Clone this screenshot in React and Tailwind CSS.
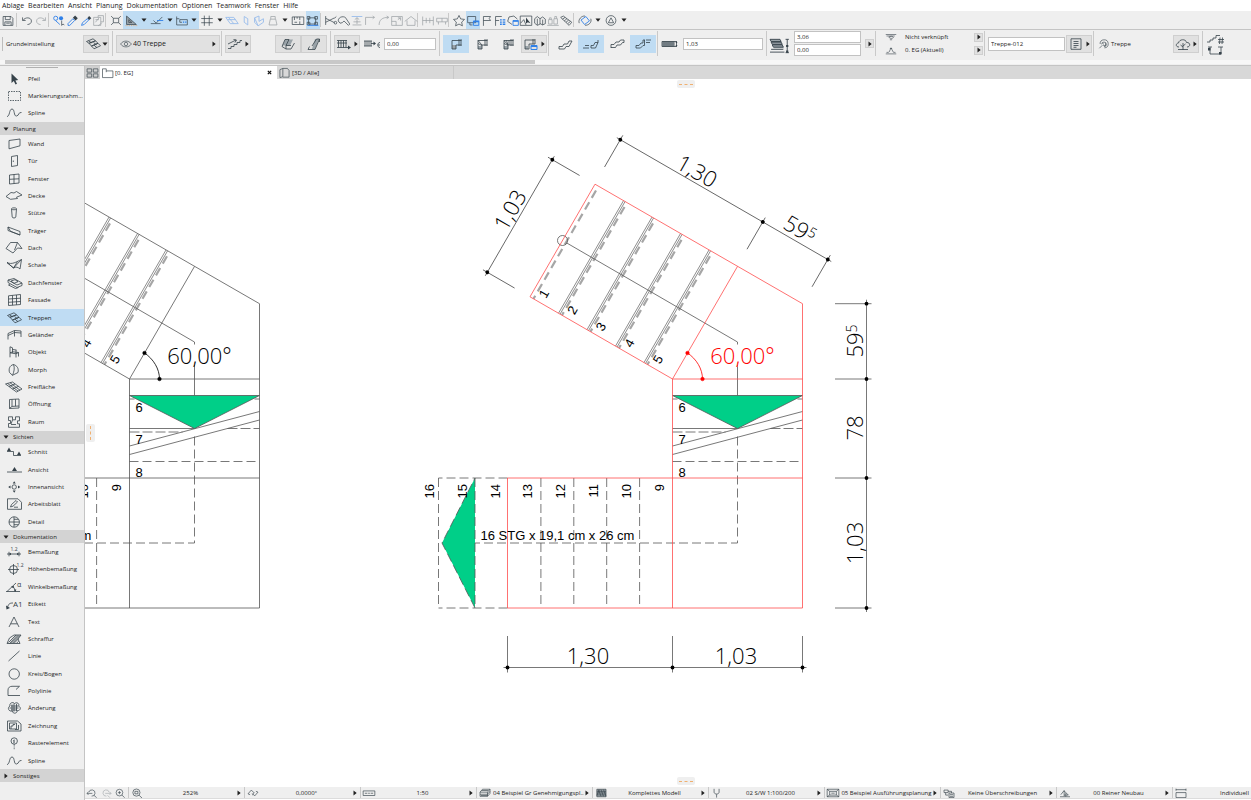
import { useState } from 'react';
import clsx from 'clsx';

const INK = '#36424a';
const BLUE = '#2f80e8';

// d: outline, f: filled shape, b: blue outline, bf: blue filled shape, s: shaded face, t: small lettering [x, y, size, text]
const icons = {
  // palette
  arrow: { f: 'M6.500 .5v9.500l2.300-2 1.700 3.500 1.500-.8-1.600-3.200 2.800-.4z' },
  marquee: { d: 'M3.500 1.500h12v9h-12z', dash: '1.500 1' },
  spline: { d: 'M2 9.500C5 9.500 4 2 7 2s1.500 7.500 4.500 7 1.500-4 5-3.500' },
  wall: { d: 'M4 2.500L15 1v6.800L4 10.800z' },
  door: { d: 'M6.500 1.500L12.500.5v10l-6 1zM8.300 5.500v1.500' },
  window: { d: 'M4.500 2l9.500-1v9l-9.500 1zM9 1.500v9M4.500 6.300L14 5.800' },
  slab: { d: 'M1 6.500l5-4L9 3l2.500-1.500L17 5l-5.500 2.200 1 1.300L5.500 9.300z' },
  column: { d: 'M6.500 1.800c0-1.300 5-1.300 5 0s-5 1.300-5 0l.7 8.200c0 1.300 3.600 1.300 3.600 0l.7-8.200' },
  beam: { d: 'M3 2l12 4.500v3.500L3 5.500zM3 2l2.500 4.300 9.500 3.700' },
  roof: { d: 'M1 6.500l4.500-6h7l4.500 6-4.500-.5L8 11zM12.500.5L9.500 8' },
  shell: { d: 'M2 3.500c5 2.500 9-.5 14.500-3L15 10c-2-2-4-2.500-6.500-1zM2 3.500L8.500 9l4-6.500M8.500 9l8-8.500' },
  skylight: { d: 'M3 3l6-1.500L17 6l-5 2zM3 3v2.500l9 5 5-2V6M6 4l4-1.300 3 2L9 6.300zM5 7.500L3.500 8l7 3.500 3-1' },
  facade: { d: 'M3.500 1.800L15.500.5v10L3.500 11.500zM7.500 1.400v9.800M11.500 1v9.800M3.500 5l12-.8M3.500 8.300l12-.8' },
  stair: { d: 'M2.500 3.500L9 .8l2.500 2-6.500 2.500zM5 5.300l6.500-2.500L14 5.300 7.500 8zM7.500 8L14 5.300l2.500 2.500L10 10.800zM4.500 2.800l3 2M9.500 4.500l3 2.300M10 7.200l3 2.500' },
  railing: { d: 'M3 4.500L9.500 1.500 16 2M3 4.500v6M9.500 1.500v6M16 2v6M3 6.500L9.500 3.500 16 4' },
  chair: { d: 'M5 .8v6l6 1V4M5 .8l2.500 1v5M5 6.800v4.500M11 7.800v3.700M13.500 6.500v4M5 6.800l3-1 5.500.7-2.500 1.300M7.500 3.500l4 .5' },
  morph: { d: 'M8.500.5C4.500 1.500 3.500 5 4.500 8.500l3 2.800L13 8.500c1-4-1-7-4.500-8zM8.500.5C10 4 9 8 7.500 11.300' },
  mesh: { d: 'M.5 3l7-2 9.500 7-5.500 3zM2.500 2.400L13 10M5 1.700L15 9.200M4 5.500l6-2.500M7.500 8l6-2.700' },
  opening: { d: 'M4.500 1.500L14 1v9l-9.500.5zM7 1.400v7L14 8M7 8.400l-2.500 2M10.500 1.200v7' },
  zone: { d: 'M3.500.8h4v3h3v-3h4v4h-2v3h2v3.500h-11V7.500h2v-3h-2zM6 8.500l5 0M6 8l1.500-4' },
  section: { d: 'M2 5.500h6.500v4H16', f: 'M2 5L4 1.500 6 5zM12 9l2-3.500L16 9z' },
  elevation: { d: 'M2 8h15', f: 'M7 7l2.500-4L12 7z' },
  interior: { d: 'M7 6a2.200 2.200 0 1 0 4.400 0a2.200 2.200 0 1 0-4.400 0', f: 'M7.700 2.500L9.200.2l1.500 2.300zM7.700 9.500l1.500 2.300 1.500-2.300zM5.500 4.500L3.200 6l2.300 1.500zM13 4.500L15.300 6 13 7.500z' },
  worksheet: { d: 'M2.500.8h10.500l3.500 3.500v7h-14zM5.500 9l1-2.500L11 2.500l1.500 1.500L8 8.200zM9 9.200h4' },
  detail: { d: 'M4 6a5.200 5.200 0 1 0 10.400 0a5.200 5.200 0 1 0-10.400 0M9 .8v10.400M4 6h10.400M9 3.300h4.300M9 8.700h4.300' },
  dim: { d: 'M2 8h14M4 5.800v4.500M14 5.800v4.500', f: 'M4 8l2-1.200v2.400zM14 8l-2-1.200v2.400z', t: [5.5, 4.5, 5, '1.2'] },
  level: { d: 'M4.500 6.500a4 4 0 1 0 8 0a4 4 0 1 0-8 0M8.500 1v11M3 6.500h11', t: [11.5, 3.8, 5, '1.2'] },
  angle: { d: 'M1 10.500h14M2 10.500L11 2M7.500 5.500c2 1 2.500 3 2.500 5', f: 'M6 5.500l3-.5-.5 2.500zM9 8.500h2.400L10.200 11z', t: [12, 5.5, 7, 'α'] },
  label: { d: 'M2.500 9.500c1-4 2.500-4.500 5.500-4.500', f: 'M1 7.500l4 2.500-3.500 1.500z', t: [8, 9, 8, 'A1'] },
  text: { d: 'M4 11L9 1l5 10M5.700 7.800h6.600' },
  hatch: { d: 'M2 10.500L4.500 5 9 2h7L13 6l2 4.500zM3.500 9.500L11 2M6 10.300L14 2.300M9 10.300l4.500-4.500M11.500 10.300l2-2M4.500 10.500L12.500 2M7.500 10.300L15 2.500' },
  line: { d: 'M3.500 11L14.500 1' },
  circle: { d: 'M4 6a5.200 5.200 0 1 0 10.400 0a5.200 5.200 0 1 0-10.400 0' },
  polyline: { d: 'M15 10.500H3V5c0-2.500 2-3.700 4-3.700h7.500L11 4.500' },
  change: { d: 'M5 4C4 1 8-.5 9.500 1.500 12-.5 15 2 13.500 4.200 16.500 5 15.500 9 12.500 8.500 12 12 7.500 12 7.500 9 3.500 10 2 5.500 5 4zM4.500 6h9M6 4h7M6 8h6M9 1.500v8M7 2.500v6M11.500 2v7' },
  drawing: { d: 'M2.500 1h10l3.500 3v7H2.500zM4.500 3h7v6h-7zM6 9V6h2V4.500h2M13.500 5v4.500H10' },
  grid: { d: 'M6 4a3.200 3.200 0 1 0 6.400 0a3.200 3.200 0 1 0-6.400 0M9.200 7.200v1.500M9.200 9.500v1M9.200 11.200v1', f: 'M8.500 3.200l1-1v4h-1z' },
  // tool bar
  save: { d: 'M3.500 1.500h9l2 2v8h-11zM6 1.500v3.500h5.500V1.500M5.500 11.500V7.500h7v4M7 9h4' },
  undo: { d: 'M4 2.500v3.500h3.500M4.500 5.800C7 2 13.500 2 14 6.500c0 2.500-2 4-4.500 4' },
  redo: { d: 'M14 2.500v3.500h-3.500M13.500 5.800C11 2 4.500 2 4 6.500c0 2.500 2 4 4.500 4' },
  find: { b: 'M3 3.500a2.300 2.300 0 1 0 4.600 0a2.300 2.300 0 1 0-4.600 0M5 6l5 4.500', bf: 'M9 3.500a2.300 2.300 0 1 0 4.600 0a2.300 2.300 0 1 0-4.600 0', d: 'M12 6v5.500l1.500-1.500 1.500 1' },
  dropper: { f: 'M10 3l2.500-2.500 3 3L13 6z', b: 'M10 4l2 2-5.500 5.500H4.500v-2z' },
  syringe: { f: 'M12.500 1l2.500 2.500-2.500 2-2-2z', b: 'M10.500 4l1.500 1.500-5 5-3 1 1-3z' },
  transfer: { d: 'M3 2.500h8v9H3zM8 2.500V.5h6v7h-3M5 5h4M5 8l4-5M12 9l-4 3' },
  target: { d: 'M6 3.500h6v5H6zM3.500 1l2.500 2.500M14.500 1L12 3.500M3.500 11L6 8.500M14.500 11L12 8.500' },
  setsquare: { d: 'M4 1v9.500h11zM6.500 5v3.200H10z', s: 'M4 1v9.500h11z', o: 'M3 11.800h13' },
  guide: { d: 'M2 9.500h11M5 6l3 3L15 2', b: 'M9 6h7' },
  snap: { d: 'M3 1.500V11h12V5H6.500v3H9M3 4h3', bf: 'M10 7h1.500v1.500H10zM12.500 7H14v1.500h-1.500z' },
  hash: { d: 'M6 .5v11.500M11.500 .5v11.500M2.500 3.800h13M2.500 8.500h13' },
  plane: { b: 'M2 2.500h9l5 7H7zM5 2.500l6 7M4 5h9' },
  plane2: { b: 'M7 1.500l4 2.500v7L7 8z' },
  plane3: { b: 'M4 3l5-2v6l5-3v4l-6 4zM4 3v5l4 4' },
  gravity: { d: 'M6 4.500h6l1.500 6.500h-9zM6.500 4.500V1.500h5v3' },
  ruler: { d: 'M2.500 2h13v8.500h-13zM5 2v3.500M8 2v2M11 2v3.500M5 8h3M11 7v3' },
  group: { d: 'M4 3h8v7H4zM2.500 1.500h3v3h-3zM11 1.500h3v3h-3zM2.500 8h3v3h-3zM11 8h3v3h-3z', b: 'M3 11.500h12' },
  scissors: { d: 'M3 1v10M3 3.500l10 5M3 8l10-5M13 3.500l2-2M12.500 8.500a1.500 1.500 0 1 0 3 0a1.500 1.500 0 1 0-3 0' },
  pick: { d: 'M2.500 6.500c0-5.500 8-6 9-2.500L15.500 10l-1.500 1.500-5-5L7 8.500 4.500 9z' },
  adjust: { b: 'M3 1.500h12', d: 'M9 3v7M6.500 5L9 2.800 11.500 5M4 11h10M5 7.500h8' },
  corner: { d: 'M4 11V2.500h10M12 1l2 1.500L12 4' },
  fillet: { d: 'M3.500 11c0-6 4-8.500 10-8.500M12 1l2.500 1.500L12 4' },
  resize: { d: 'M3 1.500h12v10H3zM3 7h5v4.500M10 5l3-2M10 3h3v3' },
  house: { d: 'M2 7l7-5.500L16 7M4.500 6v5.500h9V6' },
  spread: { d: 'M3 1.500v10M15 1.500v10M3 6h12M7 3v6M11 3v6' },
  align: { d: 'M3 3.500h12v4H3zM5 7.500v3M13 7.500v3M9 3.500v4' },
  star: { d: 'M9 .3l1.900 3.900 4.300.6-3.200 3 .8 4.200L9 10l-3.800 2 .8-4.200-3.200-3 4.300-.6z' },
  layers: { d: 'M3 1.500h9v7H3zM5.500 8.500v2.500h3', b: 'M9.500 6.500h6v5h-6z', bf: 'M9.500 6.500h6v1.500h-6z' },
  flag: { d: 'M5 12V1.500h8l-1.500 2.300L13 6H5' },
  flaglist: { d: 'M4 12V1.500h7M4 6h4', bf: 'M9 4.500h2V6H9zM12 4.500h3V6h-3zM9 7h2v1.500H9zM12 7h3v1.500h-3zM9 9.500h2V11H9zM12 9.500h3V11h-3z' },
  cloudcal: { d: 'M8 10.500L3 7l1.500-5L10 1l4 3.500', b: 'M9 6h6v5.500H9z', bf: 'M9 6h6v1.500H9z' },
  picarrow: { d: 'M2.500 1h13v10.500h-13zM3 9l3.500-4L9 11', f: 'M9 2.500v7l2-1.500 3 1z' },
  box3: { d: 'M3 4l3-2.500L9 4v6l-3 1.500L3 9zM9 4l3-2 3 2.500v5L12 11 9 9.500M6 4v7M12 5v6' },
  bottles: { d: 'M4 5h4v5H4zM5 5V3h2v2M10 4h4v6h-4zM11 4V1.500h2V4M2.500 11.500h13' },
  stripes: { d: 'M3 2.500l3-1.500 9.500 7-3 3.500zM5 4.500l3-2M7 6.500l3-2.500M9 8l3-2.500M11 9.500l3-2.500' },
  rotcube: { b: 'M4.500 5.500l5.500-4 4 5L8.500 10.500z', d: 'M2.500 9C1 5 5 .5 9 1M15.500 4C17 8 13 11.800 9 11.300' },
  tricircle: { d: 'M3.500 6a5.500 5.500 0 1 0 11 0a5.500 5.500 0 1 0-11 0M6 8.500L9 3l3 5.500z' },
  // info bar
  eye: { d: 'M2 6c3.500-5 10.500-5 14 0-3.500 5-10.500 5-14 0M6.800 6a2.200 2.200 0 1 0 4.400 0a2.200 2.200 0 1 0-4.400 0' },
  upstairs: { d: 'M2 10.500h3V8.500h3V6.500h3V4.500h3V2.500h2M2 6l8-4M7.500 1.500L10.500 2 9 4.500' },
  riserL: { s: 'M6 1.500h8l-3 6H3.500z', d: 'M6 1.500h4L7 7.500v3.500L3 8.500zM7 11h5l3.500-6M7 7.500h5' },
  riserR: { s: 'M10 1h4l-4 10H7z', d: 'M3 11.500h7l4.500-10.500h-3L7 8M3 11.500l1.500-3M14.500 1v3' },
  comb: { d: 'M2 2.500h10M2 5h10M3.500 2.500v7M6 2.500v7M8.500 2.500v7M11 2.500v7M2 9.500h13', f: 'M13 7.500l3 2-3 2z' },
  comb2: { d: 'M1 3h8M1 8h8M2 3v5M4 3v5M6 3v5M8 3v5M8 5.500h4M17 4.500c-3 0-3 5 0 5M15 7h2', f: 'M10.500 3.500L13 5.500l-2.500 2z' },
  turnA: { s: 'M5 7h4v4H5z', d: 'M5 11V2.500h9.500M9 11V7h5.500M5 11h4M12 1v7M14 1v7' },
  turnB: { s: 'M5 8h4v3H5z', d: 'M5 11V2.500h9.500M9 11V7h5.500M5 11h4M12 1v7M14 1v7M5 2.500l4 4.500M5 5.500l4 2' },
  turnC: { s: 'M5 8h4v3H5z', d: 'M5 11V2.500h9.500M9 11V7h5.500M5 11h4M12 1v7M14 1v7M5 2.500l4 4.500M5 5.500l4 2M7.500 2.500L9 7M10 2.500V7' },
  turnD: { s: 'M3 8h3v3H3z', d: 'M3 11V2h10M7 11V6M3 11h4M11 1v5M13 1v5M7 6h6', b: 'M9 7.500h6v4H9z', bf: 'M9 7.500h6V9H9z' },
  lowA: { d: 'M3 8.500h3.500L8 6h3.500L13 3h3M3 11h5.500l1.500-2.500h3L16 3M3 8.500V11' },
  lowB: { d: 'M9 10h4.500L16 4.500V2M9 7.500h2.500L13 4.500h3M9 7.500V10M1 10h6M3 7.500h4' },
  lowC: { d: 'M3 10V6.500h3L8 4h3l1.500-2H16v2.500h-1.500L12.500 7H9l-1.500 2.500H3' },
  lowD: { d: 'M2 10V7.500h3L7 5h2V2h2M2 10h4.500L9 7.500h1.500V2M12 2h5M12 4.500h4' },
  width: { s: 'M1 3.500h12v5H1z', d: 'M1 3.500h12v5H1zM3 3.500v5M5 3.500v5M7 3.500v5M9 3.500v5M11 3.500v5M13 3.500h3M13 8.500h3M15.500 4v4', f: 'M14.500 5l1-1.700 1 1.700zM14.500 7l1 1.700 1-1.700z' },
  height: { s: 'M0 0h9l3.500 8h-9z', d: 'M0 0h9l1 2H1zM1 2.500h9l1 2H2zM2 5h9l1 2H3zM1 9h11M0 11.500h13M15.500 0v12M14 0h3M14 12h3', f: 'M14.500 5h2v2h-2zM14.500 10h2v2h-2z' },
  storyTop: { d: 'M2 2h14M3 4h11M6 5.500c2-1.500 5-1.500 6 0s-4 3-6 0M7.500 9h3' },
  storyBase: { d: 'M2 10.500h14M3 8.500h3M12 8.500h3M6.500 8L9 2.500 12 8M7.500 4L9 2.500 10.500 4' },
  sheet: { d: 'M4 .8h10v10.500H4zM6.500 3.500h5M6.500 5.500h5M6.500 7.500h5M6.500 9.300h3' },
  spiral: { d: 'M4 6a5.200 5.200 0 1 1 5.500 5M6 6.500a3 3 0 1 1 3 3M3 11.500l4-4M9 6.500L7 5M8 8h3V5' },
  tree: { d: 'M9 12V5M9 9L6.500 7M9 8l2.500-2M5 9C1 9 2 5 4.500 5 5 1 12 .5 12.500 4.500 16.500 4 17 9 13 9M4 11.500h10' },
  stairhash: { d: 'M1 10h3V8h3V6h3V3.500h4M12 7.500h6M12 10h6M14 5.500l-.5 6.500M16.500 5.500l-.5 6.500' },
  stairdim: { d: 'M4 3v7h11V3M12 3h5M2 3h4', f: 'M2 4h2.500v2.500H2zM13 8h2.500v2.500H13z' },
  // tabs and status bar
  tiles: { d: 'M2.500 1h5.500v4H2.500zM10 1h5.500v4H10zM2.500 7h5.500v4H2.500zM10 7h5.500v4H10z' },
  plan: { d: 'M3 1h4.500v2.500H15.500V11.500H3zM7.500 3.500v1.500' },
  cube: { d: 'M3.500 2l3.500-1.500v10L3.500 11.500zM7 .5h5.500l2 2.500v8H7' },
  zoomprev: { d: 'M5 5a4 4 0 1 1 3.500 5M11.500 9l3.500 3M2.500 6.500h7M4.500 4.500l-2 2 2 2' },
  zoomnext: { d: 'M13 5a4 4 0 1 0-3.500 5M11 9l3 3M15.500 6.500H8M13.500 4.500l2 2-2 2' },
  zoomin: { d: 'M4 5.500a4.300 4.300 0 1 0 8.600 0a4.300 4.300 0 1 0-8.600 0M11.500 8.700L15 12M6.300 5.500h4M8.300 3.500v4' },
  zoomfit: { d: 'M4 5.500a4.300 4.300 0 1 0 8.600 0a4.300 4.300 0 1 0-8.600 0M11.500 8.700L15 12M6.500 4v3h3.600V4z' },
  orient: { d: 'M3 7l4-4.500L10.500 6 8 8.500M3 7l2.500 1M15 5l-4 4.500L8 6.500M15 5l-2.500-1' },
  scale: { d: 'M2 3.500h14v5.500H2zM4 6.300h3M8 6.300h2M11 6.300h3' },
  stack: { d: 'M3 5l3-3.500h9L12 5zM3 5v2.500h9l3-3.500V1.500M3 7.500V10h9l3-3.500V4M12 5v5M5 3h8M4 9h8' },
  model: { s: 'M4 1.500h11v9H4z', d: 'M4 1.500h11v9H4zM4 4h11M4 6h11M4 8.300h11M6 2l3 8M9 2l3 8M12 2l3 8M7 2L4 9' },
  pen: { d: 'M5.500 1v4c0 3 6 3 6 0V1M8.500 7.500v4' },
  view: { d: 'M2 1.500h14v9H2zM5 4h8v4.500H5zM7 6.200h4M2 1.500L5 4M16 1.500L13 4M2 10.500l3-2M16 10.500l-3-2' },
  override: { d: 'M3 2.500h5v3H3zM5 5.500v3h3M8 4h4v2M9 6h6v5.500H9zM10 8h4M10 10h4' },
  renovate: { d: 'M3 10.500h12M4 8l4-5v7M8 3.500l5 5H8M10 10.500V6' },
  dimpref: { d: 'M3 2h12M3 .8v2.500M15 .8v2.500M3 5.500h12v6H3z' },
};

const Icon = ({ name, className = 'h-3 w-[18px]', color = INK }) => {
  const { d, f, b, bf, o, s, t, dash } = icons[name];
  return (
    <svg viewBox="0 0 18 12" className={clsx('shrink-0 overflow-visible', className)} fill="none" strokeWidth="0.8" aria-hidden="true">
      {s && <path d={s} fill="#9aa3a9" />}
      {d && <path d={d} stroke={color} strokeDasharray={dash} />}
      {f && <path d={f} fill={color} />}
      {b && <path d={b} stroke={BLUE} strokeWidth="1" />}
      {bf && <path d={bf} fill={BLUE} />}
      {o && <path d={o} stroke="#e8954a" strokeDasharray="1 1" />}
      {t && <text x={t[0]} y={t[1]} fontSize={t[2]} fill={color}>{t[3]}</text>}
    </svg>
  );
};

const Caret = ({ down }) => (
  <svg viewBox="0 0 6 6" className="h-1.5 w-1.5 shrink-0" aria-hidden="true">
    <path d={down ? 'M.5 1.500h5L3 4.700z' : 'M1.500.5v5L4.700 3z'} fill="#222" />
  </svg>
);

const menus = ['Ablage', 'Bearbeiten', 'Ansicht', 'Planung', 'Dokumentation', 'Optionen', 'Teamwork', 'Fenster', 'Hilfe'];

const W13 = 'w-[13px]';
const W14 = 'w-[14px]';
const W16 = 'w-[16px]';
const SEP = { sep: true };
const more = (label, active) => ({ more: true, label, active });

const tools = [
  { icon: 'save', label: 'Sichern', w: W16 }, SEP,
  { icon: 'undo', label: 'Widerrufen' }, { icon: 'redo', label: 'Wiederholen', dim: true }, SEP,
  { icon: 'find', label: 'Suchen', w: W13 }, { icon: 'dropper', label: 'Aufnehmen' },
  { icon: 'syringe', label: 'Übertragen', w: W13 }, { icon: 'transfer', label: 'Einstellungen', w: W13, dim: true }, SEP,
  { icon: 'target', label: 'Ursprung' },
  { icon: 'setsquare', label: 'Hilfslinien', w: W16, active: true }, more('Hilfslinien-Optionen', true),
  { icon: 'guide', label: 'Fangpunkte', w: W16, active: true }, more('Fangpunkt-Optionen', true),
  { icon: 'snap', label: 'Fangbezug', w: W14, active: true }, more('Fangbezug-Optionen', true),
  { icon: 'hash', label: 'Raster', w: W16 }, more('Raster-Optionen'),
  { icon: 'plane', label: 'Ebene', dim: true }, { icon: 'plane2', label: 'Ebene versetzen', w: W13, dim: true },
  { icon: 'plane3', label: 'Ebene drehen', dim: true }, { icon: 'gravity', label: 'Schwerkraft', dim: true }, more('Schwerkraft-Optionen'),
  { icon: 'ruler', label: 'Lineal', w: W16 }, { icon: 'group', label: 'Gruppieren', active: true }, SEP,
  { icon: 'scissors', label: 'Trennen', w: W13 }, { icon: 'pick', label: 'Anpassen', w: W13 },
  { icon: 'adjust', label: 'Ausrichten', w: W13, dim: true }, { icon: 'corner', label: 'Ecke', dim: true },
  { icon: 'fillet', label: 'Abrunden', w: W13, dim: true }, { icon: 'resize', label: 'Größe ändern', dim: true },
  { icon: 'house', label: 'Dach trimmen', w: W13, dim: true }, SEP,
  { icon: 'spread', label: 'Verteilen', dim: true }, { icon: 'align', label: 'Angleichen', w: W13, dim: true }, SEP,
  { icon: 'star', label: 'Favoriten' }, { icon: 'layers', label: 'Ebenen', active: true },
  { icon: 'flag', label: 'Markierung', w: W13 }, { icon: 'flaglist', label: 'Markierungsliste', w: W13 },
  { icon: 'cloudcal', label: 'Änderungen', w: W13 }, { icon: 'picarrow', label: 'Auswahl' },
  { icon: 'box3', label: 'Modell', w: W13 }, { icon: 'bottles', label: 'Oberflächen', w: W13, dim: true },
  { icon: 'stripes', label: 'Maßband', w: W14 }, SEP,
  { icon: 'rotcube', label: '3D-Ansicht', w: W16 }, more('3D-Optionen'),
  { icon: 'tricircle', label: 'Projektion', w: W16 }, more('Projektions-Optionen'),
];

const Toolbar = () => (
  <div role="toolbar" className="flex h-[19px] shrink-0 items-stretch overflow-hidden border-b border-[#c4c4c4] bg-[#efefef]">
    {tools.map((t, i) => {
      if (t.sep) return <span key={i} className="my-0.5 w-1 shrink-0 border-l border-[#c9c9c9]" />;
      return (
        <button
          key={i}
          aria-label={t.label}
          className={clsx('flex shrink-0 items-center justify-center', t.more ? 'w-[10px]' : t.w || W14, t.active && 'bg-[#bfdcf3]', t.dim && 'opacity-45')}
        >
          {t.more ? <Caret down /> : <Icon name={t.icon} className="h-[11px] w-4" />}
        </button>
      );
    })}
  </div>
);

const Group = ({ children, className }) => (
  <div className={clsx('my-px flex w-[109px] shrink-0 items-center border-l border-[#c9c9c9] pl-[3px]', className)}>{children}</div>
);

const Tool = ({ icon, label, menu, active, flat, down }) => (
  <button
    aria-label={label}
    className={clsx(
      'flex h-[18px] w-[26px] shrink-0 items-center justify-center border',
      active ? 'border-[#bfdcf3] bg-[#bfdcf3]' : flat ? 'border-transparent' : 'border-[#cfcfcf] bg-[#e1e1e1]',
    )}
  >
    <Icon name={icon} className="h-3 w-[18px]" />
    {menu && <Caret down={down} />}
  </button>
);

const Field = ({ label, value, className }) => (
  <input
    aria-label={label}
    defaultValue={value}
    className={clsx('min-w-0 border border-[#c2c2c2] bg-white px-0.5 text-[6px] leading-none outline-none', className)}
  />
);

const Pop = ({ label }) => (
  <button aria-label={label} className="flex h-[9px] w-[9px] shrink-0 items-center justify-center border border-[#cfcfcf] bg-[#e1e1e1]">
    <Caret />
  </button>
);

const InfoBar = () => (
  <div className="shrink-0 border-b border-[#c4c4c4] bg-[#efefef]">
    <div className="flex h-[27px] overflow-hidden">
      <div className="flex w-[112px] shrink-0 items-center justify-between pr-[3px] pl-0.5">
        <span className="flex items-center">
          <span className="h-3.5 w-1 border-l border-[#bdbdbd]" />
          Grundeinstellung
        </span>
        <Tool icon="stair" label="Treppen-Einstellungen" menu down />
      </div>
      <Group>
        <label className="relative flex h-[18px] w-[104px] items-center border border-[#cfcfcf] bg-[#e1e1e1] px-0.5">
          <Icon name="eye" className="h-2.5 w-3.5" />
          <select aria-label="Ebene" className="min-w-0 flex-1 appearance-none text-[7px] outline-none">
            <option>40 Treppe</option>
          </select>
          <Caret />
        </label>
      </Group>
      <Group className="justify-between pr-[3px]">
        <Tool icon="upstairs" label="Laufrichtung" menu />
        <span className="flex">
          <Tool icon="riserL" label="Auftritt" />
          <Tool icon="riserR" label="Setzstufe" />
        </span>
      </Group>
      <Group className="gap-[3px] pr-[3px]">
        <Tool icon="comb" label="Referenzlinie" menu />
        <Icon name="comb2" />
        <Field label="Versatz" value="0,00" className="h-3 flex-1" />
      </Group>
      <Group className="justify-between pr-[3px]">
        <Tool icon="turnA" label="Podest" active />
        <Tool icon="turnB" label="Gewendelt" flat />
        <Tool icon="turnC" label="Gleichmäßig gewendelt" flat />
        <Tool icon="turnD" label="Wendelung" menu />
      </Group>
      <Group className="justify-between pr-[3px]">
        <Tool icon="lowA" label="Unten" flat />
        <Tool icon="lowB" label="Unten bündig" active />
        <Tool icon="lowC" label="Oben" flat />
        <Tool icon="lowD" label="Oben bündig" active />
      </Group>
      <Group className="gap-1 pr-[3px] pl-1.5">
        <Icon name="width" />
        <Field label="Breite" value="1,03" className="h-3 flex-1" />
      </Group>
      <Group className="gap-1 pr-px">
        <Icon name="height" className="mt-1 h-3.5 w-5" />
        <div className="flex min-w-0 flex-1 flex-col gap-px">
          <Field label="Höhe" value="3,06" className="h-3" />
          <Field label="Basishöhe" value="0,00" className="h-3" />
        </div>
        <Pop label="Höhe wählen" />
      </Group>
      <Group className="pr-px">
        <div className="flex flex-1 flex-col gap-1">
          {[['storyTop', 'Nicht verknüpft'], ['storyBase', '0. EG (Aktuell)']].map(([icon, text]) => (
            <div key={icon} className="flex items-center gap-1.5 pl-1">
              <Icon name={icon} className="h-[9px] w-4" />
              <span className="flex-1">{text}</span>
              <Pop label={text} />
            </div>
          ))}
        </div>
      </Group>
      <Group className="gap-px pr-px">
        <Field label="ID" value="Treppe-012" className="h-3.5 flex-1" />
        <Tool icon="sheet" label="Eigenschaften" menu />
      </Group>
      <Group className="justify-between pr-[3px]">
        <span className="flex items-center">
          <Icon name="spiral" className="h-2.5 w-3.5" />
          Treppe
        </span>
        <Tool icon="tree" label="Klassifizierung" menu />
      </Group>
      <Group className="flex-col items-start justify-center pl-1.5">
        <Icon name="stairhash" />
        <Icon name="stairdim" />
      </Group>
    </div>
    <div className="mt-[3px] mb-px flex h-1 bg-[#f7f7f7] pl-[5px]">
      <span className="w-[530px] bg-[#c8c8c8]" />
    </div>
  </div>
);

const palette = [
  { items: [['arrow', 'Pfeil'], ['marquee', 'Markierungsrahm...'], ['spline', 'Spline']] },
  {
    title: 'Planung',
    items: [
      ['wall', 'Wand'], ['door', 'Tür'], ['window', 'Fenster'], ['slab', 'Decke'], ['column', 'Stütze'], ['beam', 'Träger'],
      ['roof', 'Dach'], ['shell', 'Schale'], ['skylight', 'Dachfenster'], ['facade', 'Fassade'], ['stair', 'Treppen'],
      ['railing', 'Geländer'], ['chair', 'Objekt'], ['morph', 'Morph'], ['mesh', 'Freifläche'], ['opening', 'Öffnung'], ['zone', 'Raum'],
    ],
  },
  {
    title: 'Sichten',
    items: [['section', 'Schnitt'], ['elevation', 'Ansicht'], ['interior', 'Innenansicht'], ['worksheet', 'Arbeitsblatt'], ['detail', 'Detail']],
  },
  {
    title: 'Dokumentation',
    items: [
      ['dim', 'Bemaßung'], ['level', 'Höhenbemaßung'], ['angle', 'Winkelbemaßung'], ['label', 'Etikett'], ['text', 'Text'],
      ['hatch', 'Schraffur'], ['line', 'Linie'], ['circle', 'Kreis/Bogen'], ['polyline', 'Polylinie'], ['change', 'Änderung'],
      ['drawing', 'Zeichnung'], ['grid', 'Rasterelement'], ['spline', 'Spline'],
    ],
  },
  { title: 'Sonstiges', items: [], closed: true },
];

const Palette = () => {
  const [tool, setTool] = useState('Treppen');

  return (
    <nav className="flex w-[85px] shrink-0 flex-col border-r border-[#c4c4c4] bg-[#efefef] pt-px pb-[18px]">
      <span className="mx-auto mb-0.5 h-px w-8 shrink-0 bg-[#b0b0b0]" />
      {palette.map((group, g) => [
        group.title && (
          <button key={group.title} className="flex h-[13px] shrink-0 items-center gap-1 bg-[#d3d3d3] pl-[3px]">
            <Caret down={!group.closed} />
            {group.title}
          </button>
        ),
        ...group.items.map(([icon, label], i) => (
          <button
            key={`${g}-${i}`}
            onClick={() => setTool(label)}
            className={clsx('flex min-h-0 flex-1 items-center gap-[5px] pl-[5px]', tool === label && 'bg-[#bfdcf3]')}
          >
            <Icon name={icon} />
            {label}
          </button>
        )),
      ])}
    </nav>
  );
};

const TREAD = 32.9;
const DASH = '9 4';

// only treads first..last are numbered
const Stair = ({ x, y, color, mark, label, first = 1, last = 16 }) => (
  <g transform={`translate(${x} ${y})`} fill="none" stroke="#555" strokeWidth="0.8">
    {/* upper flight, turned by 30 degrees around the inner corner */}
    <g transform="rotate(30)">
      {[1, 2, 3, 4, 5].map((n) => {
        const tx = -TREAD * (6 - n);
        return (
          <g key={n}>
            {n > 1 && <path d={`M${tx} 0V-130M${tx + 1.8} 0V-130`} strokeWidth="0.6" />}
            <path d={`M${tx + 4} 0V-130`} stroke="#a6a6a6" strokeWidth="2.200" strokeDasharray="8.500 5" strokeDashoffset="5" />
            {n >= first && (
              <text transform={`translate(${tx + 15} -6) rotate(-90)`} fontSize="13" fill="#000" stroke="none">{n}</text>
            )}
          </g>
        );
      })}
    </g>
    <circle cx="-110" cy="-138.500" r="5" />
    <path d="M-105.700-136L65-37v2.500M65-14V16.500" />

    {/* stairs down to the cut */}
    <path d="M0 20h5M125 20h5M0 53h53M98 49.500h32" strokeDasharray="10 3" />
    <path d="M0 49.500h65M0 67L130 32.500M0 75.500L130 41" />
    <path d="M0 82.500h130M65 57.500V164H-197.500" strokeDasharray={DASH} />
    <path d="M0 16.500h130L65 49.500z" fill="#00cf88" />

    {/* lower flight */}
    {[1, 2, 3, 4].map((i) => <path key={i} d={`M${-TREAD * i} 99v130`} strokeDasharray={DASH} />)}
    <path d="M-165 99H-234M-234 99v130M-165 229H-234" strokeDasharray={DASH} />
    <path d="M-197.500 99v130L-230.500 164z" fill="#00cf88" strokeDasharray={DASH} />

    <path
      d="M0 0L-142.500-82.200-77.500-194.800 130-75.300V229H-165V99H130M0 229V0H130M0 0L65-112.600"
      stroke={color}
    />
    <path d="M15-26C24-20 30-10 30 0" stroke={mark} />
    <circle cx="15" cy="-26" r="1.800" fill={mark} stroke={mark} strokeWidth="0.5" />
    <circle cx="30" cy="0" r="1.800" fill={mark} stroke={mark} strokeWidth="0.5" />

    <g fill="#000" stroke="none" fontSize="13">
      {[6, 7, 8].map((n, i) => <text key={n} x="6" y={32.5 + TREAD * i}>{n}</text>)}
      {[9, 10, 11, 12, 13, 14, 15, 16].filter((n) => n <= last).map((n, i) => (
        <text key={n} transform={`translate(${-8.5 - TREAD * i} 105) rotate(-90)`} textAnchor="end">{n}</text>
      ))}
      <text x="-192" y="160.500">16 STG x 19,1 cm x 26 cm</text>
      <text x="70" y="-15" fontSize="22" textAnchor="middle" fill={mark} className="font-['Open_Sans'] font-light">{label}</text>
    </g>
  </g>
);

// dimension chain along its own x axis, ext is the side the witness lines point to
const Dimension = ({ x, y, angle, stops, ext }) => (
  <g transform={`translate(${x} ${y}) rotate(${angle})`} stroke="#555" strokeWidth="0.8">
    <path d={`M-4 0H${stops[stops.length - 1] + 4}`} />
    {stops.map((s) => (
      <g key={s}>
        <path d={`M${s} ${ext}V${ext > 0 ? -5 : 5}`} />
        <circle cx={s} r="1.900" fill="#000" stroke="none" />
      </g>
    ))}
  </g>
);

const dimTexts = [
  [693, 178, 30, '1,30'],
  [796, 236, 30, '59', '5'],
  [517, 214, -60, '1,03'],
  [863, 341, -90, '59', '5'],
  [863, 428, -90, '78'],
  [863, 543, -90, '1,03'],
  [588, 664, 0, '1,30'],
  [736, 664, 0, '1,03'],
];

const Handle = ({ className, line }) => (
  <span className={clsx('absolute flex items-center justify-center rounded-xs bg-[#efefef]', className)}>
    <span className={clsx('border-dashed border-[#f0b070]', line)} />
  </span>
);

const Canvas = () => (
  <div className="relative min-h-0 flex-1 overflow-hidden bg-white">
    <svg className="h-full w-full font-['Liberation_Sans',Arial,sans-serif]" role="img" aria-label="Grundriss">
      <g transform="translate(-85 -79)">
        <Stair x={129.5} y={379} color="#555" mark="#000" label="60,00°" first={4} last={10} />
        <Stair x={672.5} y={379} color="#ff4d4d" mark="#ff0000" label="60,00°" />
        <Dimension x={487.3} y={272.3} angle={-60} stops={[0, 130]} ext={31.5} />
        <Dimension x={620.3} y={139.7} angle={30} stops={[0, 164.5, 239.6]} ext={31.5} />
        <Dimension x={866.5} y={303.7} angle={90} stops={[0, 75.3, 174.3, 304.3]} ext={31.5} />
        <Dimension x={507.5} y={667.5} angle={0} stops={[0, 165, 295]} ext={-31.5} />
        {dimTexts.map(([x, y, angle, text, sup], i) => (
          <text
            key={i}
            transform={`translate(${x} ${y}) rotate(${angle})`}
            textAnchor="middle"
            fontSize="22"
            className="font-['Open_Sans'] font-light"
          >
            {text}
            {sup && <tspan dy="-6" fontSize="14">{sup}</tspan>}
          </text>
        ))}
      </g>
    </svg>
    <Handle className="top-px left-[592px] h-2 w-[18px]" line="w-3.5 border-t" />
    <Handle className="bottom-0.5 left-[592px] h-2 w-[18px]" line="w-3.5 border-t" />
    <Handle className="top-[345px] left-px h-[18px] w-[9px]" line="h-3.5 border-l" />
  </div>
);

const Tabs = () => (
  <div role="tablist" className="flex h-[13px] shrink-0 bg-[#d8d8d8]">
    <button aria-label="Übersicht" className="flex w-[15px] items-center justify-center bg-[#d0d0d0]">
      <Icon name="tiles" className="h-2.5 w-[15px]" />
    </button>
    <div className="flex w-[177px] items-center bg-white pr-1">
      <button role="tab" aria-selected="true" className="flex flex-1 items-center">
        <Icon name="plan" className="h-2.5 w-[15px]" />
        [0. EG]
      </button>
      <button aria-label="Schließen" className="flex h-2 w-2 items-center justify-center">
        <svg viewBox="0 0 6 6" className="h-[5px] w-[5px]"><path d="M1 1l4 4M5 1L1 5" stroke="#111" strokeWidth="1.500" /></svg>
      </button>
    </div>
    <button role="tab" aria-selected="false" className="flex w-[177px] items-center border-r border-[#c8c8c8]">
      <Icon name="cube" className="h-2.5 w-[15px]" />
      [3D / Alle]
    </button>
  </div>
);

const status = [
  ['zoomfit', 'Zoom', '252%'],
  ['orient', 'Ausrichtung', '0,0000°'],
  ['scale', 'Maßstab', '1:50'],
  ['stack', 'Ebenenkombination', '04 Beispiel Gr Genehmigungspl...'],
  ['model', 'Strukturdarstellung', 'Komplettes Modell'],
  ['pen', 'Stiftset', '02 S/W 1:100/200'],
  ['view', 'Modelldarstellung', '05 Beispiel Ausführungsplanung'],
  ['override', 'Grafische Überschreibung', 'Keine Überschreibungen'],
  ['renovate', 'Umbaufilter', '00 Reiner Neubau'],
  ['dimpref', 'Bemaßung', 'Individuell'],
];

const StatusBar = () => (
  <div className="mb-px flex h-3 shrink-0 overflow-hidden border-b border-[#dcdcdc] bg-[#efefef]">
    <div className="flex w-[43px] shrink-0 items-center">
      <button aria-label="Vorheriger Ausschnitt"><Icon name="zoomprev" className="h-2.5 w-3.5" /></button>
      <button aria-label="Nächster Ausschnitt" className="opacity-40"><Icon name="zoomnext" className="h-2.5 w-3.5" /></button>
      <button aria-label="Vergrößern"><Icon name="zoomin" className="h-2.5 w-3.5" /></button>
    </div>
    {status.map(([icon, label, value]) => (
      <label key={icon} className="flex w-[116px] shrink-0 items-center border-l border-[#c9c9c9] pr-0.5">
        <Icon name={icon} className="h-2.5 w-4" />
        <select aria-label={label} className="min-w-0 flex-1 appearance-none text-center text-[6px] outline-none">
          <option>{value}</option>
        </select>
        <Caret />
      </label>
    ))}
  </div>
);

export default function App() {
  return (
    <div className="flex h-screen flex-col overflow-hidden bg-white font-['Open_Sans','Noto_Sans',sans-serif] text-[6px] leading-none text-[#1c1c1c]">
      <header className="flex h-[11px] shrink-0 items-center gap-1 bg-white pl-0.5 text-[7px]">
        {menus.map((m) => <button key={m}>{m}</button>)}
      </header>
      <Toolbar />
      <InfoBar />
      <div className="flex min-h-0 flex-1">
        <Palette />
        <main className="flex min-w-0 flex-1 flex-col">
          <Tabs />
          <Canvas />
          <StatusBar />
        </main>
      </div>
    </div>
  );
}
